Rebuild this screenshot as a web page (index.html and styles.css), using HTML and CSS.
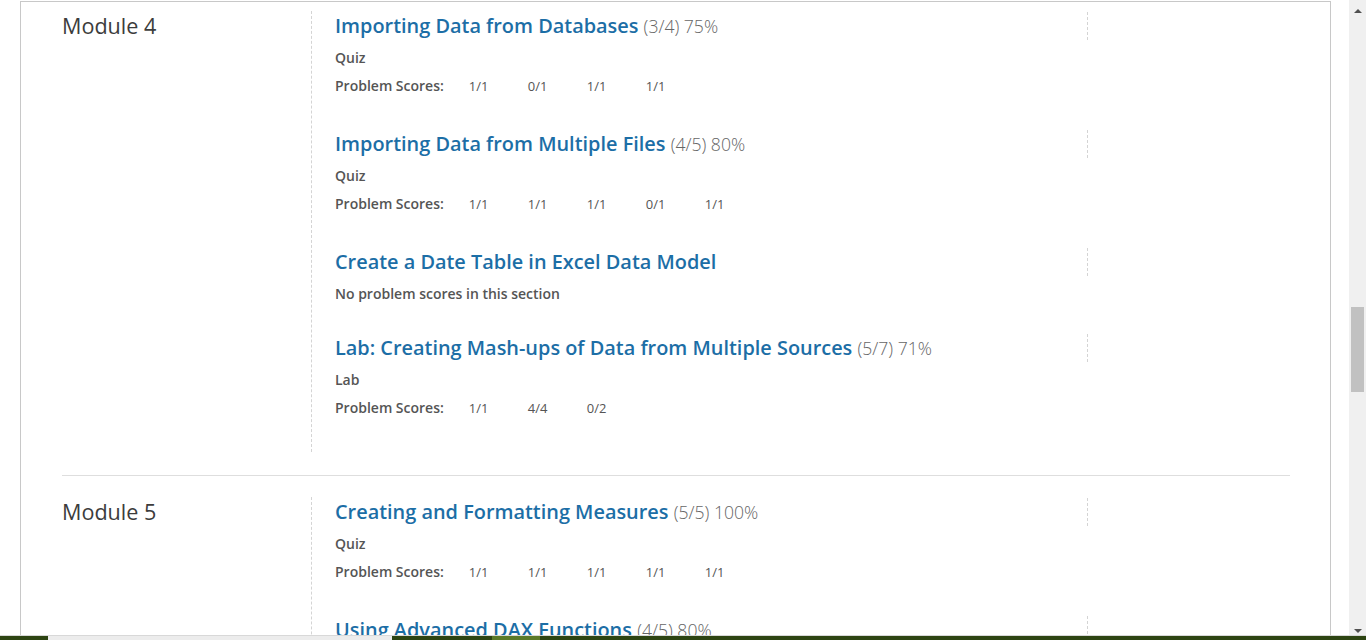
FILE: index.html
```html
<!DOCTYPE html>
<html lang="en">
<head>
<meta charset="utf-8">
<title>Progress</title>
<link rel="stylesheet" href="styles.css">
</head>
<body>
<div class="page">
  <main class="main">
    <div class="course">
      <section class="module">
        <h2 class="module-name">Module 4</h2>
        <div class="sections">
          <div class="section">
            <div class="section-head">
              <h3 class="section-title"><a href="#">Importing Data from Databases</a> <span class="pct">(3/4) 75%</span></h3>
              <div class="aside"></div>
            </div>
            <p class="format">Quiz</p>
            <div class="scores"><span class="label">Problem Scores:</span>
              <ol><li>1/1</li><li>0/1</li><li>1/1</li><li>1/1</li></ol>
            </div>
          </div>
          <div class="section">
            <div class="section-head">
              <h3 class="section-title"><a href="#">Importing Data from Multiple Files</a> <span class="pct">(4/5) 80%</span></h3>
              <div class="aside"></div>
            </div>
            <p class="format">Quiz</p>
            <div class="scores"><span class="label">Problem Scores:</span>
              <ol><li>1/1</li><li>1/1</li><li>1/1</li><li>0/1</li><li>1/1</li></ol>
            </div>
          </div>
          <div class="section section-empty">
            <div class="section-head">
              <h3 class="section-title"><a href="#">Create a Date Table in Excel Data Model</a></h3>
              <div class="aside"></div>
            </div>
            <p class="format">No problem scores in this section</p>
          </div>
          <div class="section">
            <div class="section-head">
              <h3 class="section-title"><a href="#">Lab: Creating Mash-ups of Data from Multiple Sources</a> <span class="pct">(5/7) 71%</span></h3>
              <div class="aside"></div>
            </div>
            <p class="format">Lab</p>
            <div class="scores"><span class="label">Problem Scores:</span>
              <ol><li>1/1</li><li>4/4</li><li>0/2</li></ol>
            </div>
          </div>
        </div>
      </section>
      <section class="module">
        <h2 class="module-name">Module 5</h2>
        <div class="sections">
          <div class="section">
            <div class="section-head">
              <h3 class="section-title"><a href="#">Creating and Formatting Measures</a> <span class="pct">(5/5) 100%</span></h3>
              <div class="aside"></div>
            </div>
            <p class="format">Quiz</p>
            <div class="scores"><span class="label">Problem Scores:</span>
              <ol><li>1/1</li><li>1/1</li><li>1/1</li><li>1/1</li><li>1/1</li></ol>
            </div>
          </div>
          <div class="section">
            <div class="section-head">
              <h3 class="section-title"><a href="#">Using Advanced DAX Functions</a> <span class="pct">(4/5) 80%</span></h3>
              <div class="aside"></div>
            </div>
            <p class="format">Quiz</p>
            <div class="scores"><span class="label">Problem Scores:</span>
              <ol><li>1/1</li><li>1/1</li><li>1/1</li><li>0/1</li><li>1/1</li></ol>
            </div>
          </div>
        </div>
      </section>
    </div>
  </main>
  <div class="scrollbar">
    <div class="sb-btn"><span class="tri-up"></span></div>
    <div class="sb-track"><div class="sb-thumb"></div></div>
    <div class="sb-btn"><span class="tri-down"></span></div>
  </div>
</div>
<div class="taskbar"></div>
</body>
</html>
```

FILE: styles.css
```css
html, body {
  margin: 0;
  padding: 0;
  height: 640px;
  overflow: hidden;
  background: #fff;
  font-family: "Open Sans", "Noto Sans", sans-serif;
}

.page {
  display: flex;
  height: 640px;
}

.main {
  flex: 1;
  padding-left: 20px;
  padding-right: 18px;
  overflow: hidden;
}

.course {
  margin-top: 1px;
  border-top: 1px solid #c8c8c8;
  border-left: 1px solid #c8c8c8;
  border-right: 1px solid #c8c8c8;
  padding: 0 40px 0 41px;
  min-height: 700px;
}

.module {
  display: flex;
  padding: 21px 0 23px;
  border-bottom: 1px solid #dedede;
}

.module:first-child {
  padding-top: 9px;
}

.module-name {
  width: 249px;
  flex: none;
  margin: 0;
  height: 30px;
  font-size: 21.6px;
  line-height: 30px;
  font-weight: 400;
  color: #3c3c3c;
}

.sections {
  flex: 1;
  border-left: 1px dashed #d4d4d4;
  padding-left: 23px;
}

.section {
  margin-bottom: 33px;
}

.section:last-child {
  margin-bottom: 34px;
}

.section-empty {
  margin-bottom: 29px;
}

.section-head {
  display: flex;
  align-items: flex-start;
  height: 30px;
}

.section-title {
  flex: 1;
  margin: 0;
  height: 30px;
  font-size: 19.9px;
  line-height: 30px;
  font-weight: 600;
  white-space: nowrap;
}

.section-title a {
  color: #1c6ea6;
  text-decoration: none;
}

.pct {
  font-size: 17.6px;
  font-weight: 300;
  color: #666;
}

.aside {
  width: 202px;
  height: 28px;
  margin-top: 1px;
  border-left: 1px dashed #d4d4d4;
}

.format {
  margin: 7px 0 0;
  height: 20px;
  font-size: 14px;
  line-height: 20px;
  font-weight: 600;
  color: #555;
}

.scores {
  display: flex;
  align-items: center;
  height: 20px;
  margin-top: 8px;
  line-height: 20px;
}

.label {
  font-size: 14px;
  font-weight: 600;
  color: #555;
  margin-right: 25px;
}

.scores ol {
  display: flex;
  margin: 0;
  padding: 0;
  list-style: none;
}

.scores li {
  width: 59px;
  font-size: 13px;
  color: #555;
}

.scrollbar {
  width: 17px;
  flex: none;
  background: #f0f0f0;
  display: flex;
  flex-direction: column;
}

.sb-btn {
  height: 17px;
  display: flex;
  align-items: center;
  justify-content: center;
}

.tri-up {
  width: 0;
  height: 0;
  border-left: 4px solid transparent;
  border-right: 4px solid transparent;
  border-bottom: 4px solid #505050;
  margin-top: 4px;
}

.tri-down {
  width: 0;
  height: 0;
  border-left: 4px solid transparent;
  border-right: 4px solid transparent;
  border-top: 4px solid #505050;
  margin-bottom: 2px;
}

.sb-track {
  flex: 1;
}

.sb-thumb {
  margin: 290px 2px 0 2px;
  height: 85px;
  background: #c1c1c1;
}

.taskbar {
  position: fixed;
  left: 0;
  right: 0;
  bottom: 0;
  height: 4px;
  border-top: 1px solid #d8d8d8;
  background: linear-gradient(to right,
    #2d4412 0, #2d4412 48px,
    #ececec 48px, #ececec 392px,
    #2d4412 392px, #2d4412 492px,
    #5b7a28 492px, #5b7a28 540px,
    #2d4412 540px, #2d4412 100%);
}
```
